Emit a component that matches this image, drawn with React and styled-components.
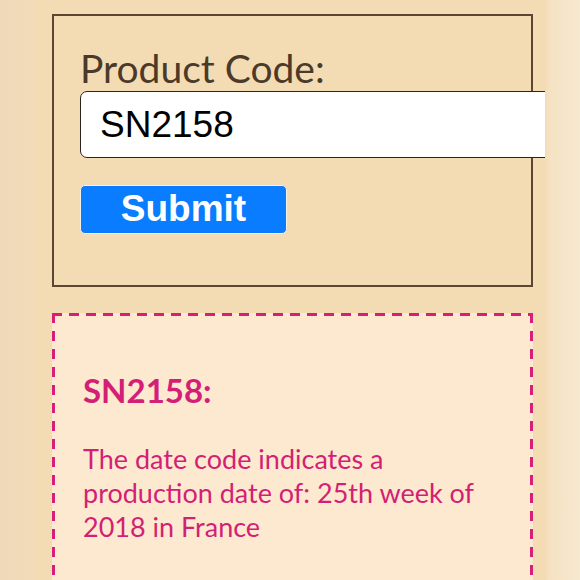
import React from "react";
import styled, { createGlobalStyle } from "styled-components";

const Global = createGlobalStyle`
  html, body { margin: 0; padding: 0; }
  body {
    width: 580px;
    height: 580px;
    overflow: hidden;
    background: linear-gradient(90deg, #efd9b8 0px, #f1dbb8 35px, #f3dcb4 35px, #f3dcb4 545px, #f5e2c3 550px, #f7e8d0 580px);
  }
`;

const Column = styled.div`
  margin-left: 35px;
  width: 510px;
  height: 580px;
  overflow: hidden;
  background: #f3dcb3;
  padding-top: 14px;
  box-sizing: border-box;
`;

const FormCard = styled.form`
  margin-left: 17px;
  width: 481px;
  height: 273px;
  box-sizing: border-box;
  border: 2px solid #5b4632;
  padding: 31px 0 0 26px;
  display: flex;
  flex-direction: column;
  align-items: flex-start;
`;

const Label = styled.label`
  font-family: "Lato", "Noto Sans", sans-serif;
  font-size: 39px;
  line-height: 42px;
  color: #4b3a2a;
  margin-bottom: 2px;
`;

const Input = styled.input`
  box-sizing: border-box;
  width: 490px;
  height: 67px;
  border: 1.5px solid #2a2420;
  border-radius: 7px;
  background: #fff;
  padding: 0 0 0 19px;
  font-family: "Liberation Sans", Arial, sans-serif;
  font-size: 37px;
  color: #000;
  outline: none;
`;

const Button = styled.button`
  margin-top: 27px;
  width: 207px;
  height: 49px;
  box-sizing: border-box;
  background: #0a7cff;
  border: 1px solid #f6f0e6;
  border-radius: 5px;
  color: #fff;
  font-family: "Liberation Sans", Arial, sans-serif;
  font-weight: 700;
  font-size: 37px;
  line-height: 1;
  padding: 0 0 2px;
`;

const dash = "#d81f76";

const ResultCard = styled.section`
  margin: 26px 0 0 17px;
  width: 481px;
  height: 300px;
  box-sizing: border-box;
  background-color: #fde9cf;
  background-image:
    repeating-linear-gradient(90deg, ${dash} 0 10px, transparent 10px 17px),
    repeating-linear-gradient(90deg, ${dash} 0 10px, transparent 10px 17px),
    repeating-linear-gradient(180deg, ${dash} 0 10px, transparent 10px 18px),
    repeating-linear-gradient(180deg, ${dash} 0 10px, transparent 10px 18px);
  background-size: 100% 3px, 100% 3px, 3px 100%, 3px 100%;
  background-position: 0 0, 0 100%, 0 0, 100% 0;
  background-repeat: no-repeat;
  padding: 57px 0 0 31px;
  color: #d31f75;
  font-family: "Lato", "Noto Sans", sans-serif;
`;

const ResultTitle = styled.h2`
  margin: 0 0 32px;
  font-size: 33px;
  font-weight: 700;
  line-height: 40px;
`;

const ResultText = styled.p`
  margin: 0;
  font-size: 27px;
  line-height: 34px;
  width: 405px;
`;

export default function App() {
  return (
    <>
      <Global />
      <Column>
        <FormCard onSubmit={(e) => e.preventDefault()}>
          <Label htmlFor="code">Product Code:</Label>
          <Input id="code" defaultValue="SN2158" />
          <Button type="submit">Submit</Button>
        </FormCard>
        <ResultCard>
          <ResultTitle>SN2158:</ResultTitle>
          <ResultText>
            The date code indicates a production date of: 25th week of 2018 in France
          </ResultText>
        </ResultCard>
      </Column>
    </>
  );
}
